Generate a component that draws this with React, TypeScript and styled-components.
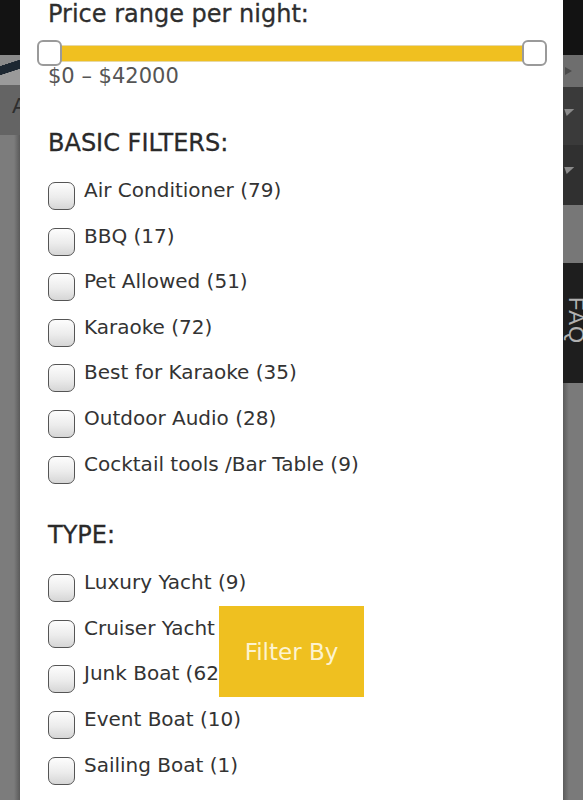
import styled, { createGlobalStyle } from "styled-components";

const GlobalStyle = createGlobalStyle`
  html, body {
    margin: 0;
    padding: 0;
    background: #777;
  }
  body {
    font-family: "DejaVu Sans", "Liberation Sans", sans-serif;
  }
`;

interface Band {
  h: number;
  bg: string;
  arrow?: "down" | "right";
  text?: string;
}

const leftBands: Band[] = [
  { h: 55, bg: "#131313" },
  { h: 30, bg: "linear-gradient(162deg, #8a8a8a 0 30%, #1d2731 31% 55%, #9a9a9a 56%)" },
  { h: 50, bg: "#646464", text: "A" },
  { h: 665, bg: "linear-gradient(90deg, #7c7c7c 0 70%, #5a5a5a 100%)" },
];

const rightBands: Band[] = [
  { h: 55, bg: "#131313" },
  { h: 32, bg: "#6e6e6e", arrow: "right" },
  { h: 58, bg: "#3a3a3a", arrow: "down" },
  { h: 60, bg: "#303030", arrow: "down" },
  { h: 58, bg: "#777" },
  { h: 120, bg: "#1e1e1e", text: "FAQ" },
  { h: 417, bg: "linear-gradient(90deg, #5c5c5c 0, #7a7a7a 30%, #7a7a7a 100%)" },
];

const basicFilters = [
  "Air Conditioner (79)",
  "BBQ (17)",
  "Pet Allowed (51)",
  "Karaoke (72)",
  "Best for Karaoke (35)",
  "Outdoor Audio (28)",
  "Cocktail tools /Bar Table (9)",
];

const types = [
  "Luxury Yacht (9)",
  "Cruiser Yacht (44)",
  "Junk Boat (62)",
  "Event Boat (10)",
  "Sailing Boat (1)",
  "Others (1)",
];

const FilterModal = () => {
  return (
    <>
      <GlobalStyle />
      <Screen>
        <Strip>
          {leftBands.map((b, i) => (
            <StripBand key={i} $h={b.h} $bg={b.bg}>
              {b.text && <BgLetter>{b.text}</BgLetter>}
            </StripBand>
          ))}
        </Strip>

        <Modal>
          <Title>Price range per night:</Title>
          <Slider>
            <Track />
            <Thumb $side="left" />
            <Thumb $side="right" />
          </Slider>
          <RangeText>$0 – $42000</RangeText>

          <SectionTitle>BASIC FILTERS:</SectionTitle>
          <List>
            {basicFilters.map((f) => (
              <Row key={f}>
                <Box />
                <Label>{f}</Label>
              </Row>
            ))}
          </List>

          <SectionTitle $gap={24}>TYPE:</SectionTitle>
          <List>
            {types.map((t) => (
              <Row key={t}>
                <Box />
                <Label>{t}</Label>
              </Row>
            ))}
          </List>
        </Modal>

        <Strip>
          {rightBands.map((b, i) => (
            <StripBand key={i} $h={b.h} $bg={b.bg}>
              {b.arrow === "down" && <DownArrow />}
              {b.arrow === "right" && <RightArrow />}
              {b.text && <VerticalText>{b.text}</VerticalText>}
            </StripBand>
          ))}
        </Strip>

        <FilterButton>Filter By</FilterButton>
      </Screen>
    </>
  );
};

const Screen = styled.div`
  position: relative;
  display: grid;
  grid-template-columns: 20px 543px 20px;
  width: 583px;
  height: 800px;
  overflow: hidden;
`;

const Strip = styled.div`
  display: flex;
  flex-direction: column;
  overflow: hidden;
`;

const StripBand = styled.div<{ $h: number; $bg: string }>`
  position: relative;
  flex: 0 0 ${({ $h }) => $h}px;
  background: ${({ $bg }) => $bg};
  overflow: hidden;
`;

const BgLetter = styled.span`
  position: absolute;
  left: 12px;
  top: 8px;
  font-family: "Liberation Sans", sans-serif;
  font-size: 22px;
  color: #2e2e2e;
`;

const DownArrow = styled.span`
  position: absolute;
  left: 0;
  top: 22px;
  width: 0;
  height: 0;
  border-left: 5px solid transparent;
  border-right: 5px solid transparent;
  border-top: 7px solid #8a8a8a;
  transform: skewX(-20deg);
`;

const RightArrow = styled.span`
  position: absolute;
  left: 2px;
  top: 12px;
  width: 0;
  height: 0;
  border-top: 4px solid transparent;
  border-bottom: 4px solid transparent;
  border-left: 7px solid #4a4a4a;
`;

const VerticalText = styled.span`
  position: absolute;
  left: 0;
  top: 34px;
  writing-mode: vertical-rl;
  font-family: "Liberation Sans", sans-serif;
  font-size: 22px;
  letter-spacing: 1px;
  color: #b0b0b0;
`;

const Modal = styled.div`
  background: #fff;
  padding: 0 28px;
  color: #333;
  overflow: hidden;
`;

const Title = styled.div`
  font-size: 24px;
  line-height: 28px;
  color: #2e2e2e;
  -webkit-text-stroke: 0.3px #2e2e2e;
`;

const Slider = styled.div`
  position: relative;
  height: 26px;
  margin-top: 12px;
  display: flex;
  align-items: center;
`;

const Track = styled.div`
  flex: 1;
  height: 17px;
  box-sizing: border-box;
  background: #f0c020;
  border: 1px solid #e6d8a6;
`;

const Thumb = styled.div<{ $side: "left" | "right" }>`
  position: absolute;
  top: 0;
  ${({ $side }) => ($side === "left" ? "left: -11px;" : "right: -12px;")}
  width: 25px;
  height: 26px;
  box-sizing: border-box;
  background: #fff;
  border: 2px solid #9a9a9a;
  border-radius: 6px;
`;

const RangeText = styled.div`
  margin-top: -2px;
  font-size: 21px;
  line-height: 24px;
  color: #555;
`;

const SectionTitle = styled.div<{ $gap?: number }>`
  margin-top: ${({ $gap }) => $gap ?? 41}px;
  margin-bottom: 21px;
  font-size: 24px;
  line-height: 28px;
  color: #2a2a2a;
  -webkit-text-stroke: 0.3px #2a2a2a;
`;

const List = styled.div`
  display: flex;
  flex-direction: column;
`;

const Row = styled.label`
  display: flex;
  align-items: flex-start;
  gap: 9px;
  height: 45.6px;
`;

const Box = styled.span`
  flex: 0 0 auto;
  margin-top: 4px;
  width: 27px;
  height: 28px;
  box-sizing: border-box;
  border: 1.5px solid #555;
  border-radius: 7px;
  background: linear-gradient(180deg, #fdfdfd 0%, #ececec 55%, #d6d6d6 100%);
`;

const Label = styled.span`
  font-size: 20px;
  line-height: 24px;
  color: #333;
  white-space: nowrap;
`;

const FilterButton = styled.button`
  position: absolute;
  left: 219px;
  top: 606px;
  width: 145px;
  height: 91px;
  border: none;
  padding: 0;
  background: #efc020;
  color: #fdf3d0;
  font-family: "DejaVu Sans", sans-serif;
  font-size: 23px;
  cursor: pointer;
`;

export default FilterModal;
